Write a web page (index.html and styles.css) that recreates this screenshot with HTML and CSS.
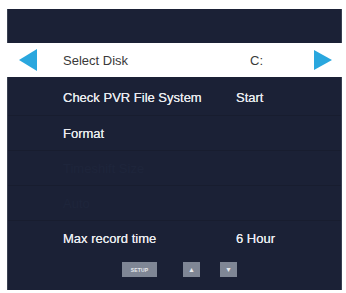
FILE: index.html
```html
<!DOCTYPE html>
<html>
<head>
<meta charset="utf-8">
<link rel="stylesheet" href="styles.css">
</head>
<body>
<div class="panel">
  <div class="top-band"></div>
  <div class="select-row">
    <svg class="arrow" width="18" height="22" viewBox="0 0 18 22"><polygon points="0,11 18,0 18,22" fill="#2aa7de"/></svg>
    <span class="sel-label">Select Disk</span>
    <span class="sel-value">C:</span>
    <svg class="arrow arrow-r" width="18" height="20" viewBox="0 0 18 20"><polygon points="0,0 18,10 0,20" fill="#2aa7de"/></svg>
  </div>
  <div class="rows">
    <div class="row"><span class="label">Check PVR File System</span><span class="value">Start</span></div>
    <div class="row"><span class="label">Format</span><span class="value"></span></div>
    <div class="row dim"><span class="label">Timeshift Size</span><span class="value"></span></div>
    <div class="row dim"><span class="label">Auto</span><span class="value"></span></div>
    <div class="row"><span class="label">Max record time</span><span class="value">6 Hour</span></div>
  </div>
  <div class="buttons">
    <span class="btn btn-setup">SETUP</span>
    <span class="btn btn-sq">&#9650;</span>
    <span class="btn btn-sq">&#9660;</span>
  </div>
</div>
</body>
</html>
```

FILE: styles.css
```css
html, body {
  margin: 0;
  padding: 0;
  background: #ffffff;
}
body {
  font-family: "Liberation Sans", Arial, sans-serif;
  width: 346px;
  height: 293px;
  overflow: hidden;
}
.panel {
  margin: 9px 4px 0 7px;
  width: 335px;
  height: 281px;
  background: #1b2136;
  display: flex;
  flex-direction: column;
  box-sizing: border-box;
  border-left: 1px solid #3a4152;
  border-right: 1px solid #3a4152;
}
.top-band {
  height: 34px;
}
.select-row {
  height: 34px;
  background: #ffffff;
  display: flex;
  align-items: center;
  padding-left: 12px;
  margin: 0 -1px;
}
.arrow {
  display: block;
  flex: none;
}
.sel-label {
  margin-left: 26px;
  width: 187px;
  font-size: 13px;
  color: #3a3a3a;
}
.sel-value {
  flex: 1;
  font-size: 13px;
  color: #3a3a3a;
}
.arrow-r {
  margin-right: 10px;
}
.rows {
  margin-top: 3px;
  display: flex;
  flex-direction: column;
}
.row {
  height: 35px;
  display: flex;
  align-items: center;
  padding-left: 55px;
  font-size: 13px;
  color: #e9ebef;
  box-sizing: border-box;
  text-shadow: 0 0 0.6px #e9ebef;
}
.row + .row {
  border-top: 1px solid #181d2f;
}
.label {
  width: 173px;
}
.row.dim {
  color: #1e253b;
  text-shadow: none;
}
.buttons {
  margin-top: 7px;
  display: flex;
  align-items: center;
  padding-left: 114px;
  gap: 26px;
}
.btn {
  background: #7f8695;
  color: #e6e8ec;
  height: 15px;
  display: flex;
  align-items: center;
  justify-content: center;
  font-size: 5px;
}
.btn-setup {
  width: 35px;
  font-weight: bold;
  letter-spacing: 0.2px;
}
.btn-sq {
  width: 17px;
  font-size: 7px;
}
.btn-sq + .btn-sq {
  margin-left: -6px;
}
```
